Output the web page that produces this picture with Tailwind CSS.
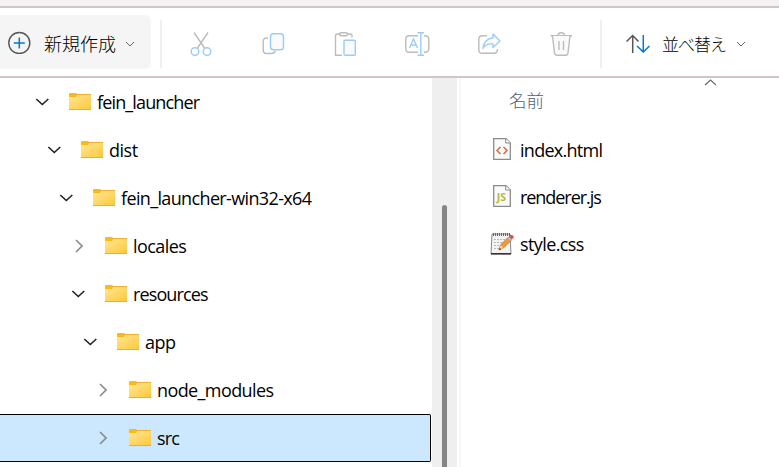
<!DOCTYPE html>
<html lang="ja">
<head>
<meta charset="utf-8">
<title>src</title>
<script src="https://cdn.jsdelivr.net/npm/@tailwindcss/browser@4"></script>
</head>
<body class="flex h-[467px] w-[779px] flex-col overflow-hidden bg-white font-['Open_Sans','Noto_Sans_CJK_JP',sans-serif] text-black">
<svg class="absolute size-0">
  <defs>
    <linearGradient id="fg" x1="0" y1="0" x2="1" y2="1"><stop offset="0" stop-color="#ffe69c"/><stop offset="1" stop-color="#ffc937"/></linearGradient>
    <symbol id="folder" viewBox="0 0 22 17">
      <path d="M0 1Q0 0 1 0H6.500Q7.200 0 8.300 1V5H0Z" fill="#fbb917"/>
      <path d="M0 4H7L8.500 2H22V16H0Z" fill="url(#fg)"/>
      <path d="M8 1H22V2H8Z" fill="#efb12c"/>
      <path d="M0 16H22V17H0Z" fill="#efad2b"/>
    </symbol>
    <symbol id="down" viewBox="0 0 14 8"><path d="M1.300 1L7.300 6.500L13.300 1" fill="none" stroke="#222" stroke-width="1.600"/></symbol>
    <symbol id="right" viewBox="0 0 8 14"><path d="M1 1L7 7L1 13" fill="none" stroke="#8c8c8c" stroke-width="1.600"/></symbol>
    <symbol id="page" viewBox="0 0 18 22"><path d="M.7.700H13L17.300 5V21.300H.7Z" fill="#fafafa" stroke="#8b8b8b" stroke-width="1.300"/><path d="M12.700.700V5H17.300" fill="#fff" stroke="#8b8b8b"/></symbol>
  </defs>
</svg>
<div class="h-2 shrink-0 border-b-2 border-[#d0c6c9] bg-[#f4f2f4]"></div>
<header class="flex h-[70px] shrink-0 items-center border-b-2 border-[#d0c6c9]">
  <button class="flex h-[54px] w-[151px] items-center rounded-r-md bg-[#f5f5f5] pl-2">
    <svg class="size-[23px]" viewBox="0 0 23 23" fill="none"><circle cx="11.300" cy="12" r="10.500" stroke="#555" stroke-width="1.400"/><path d="M11.300 6.500V17.500M5.800 12H16.800" stroke="#0078d4" stroke-width="1.500"/></svg>
    <span class="ml-[13px] w-[72px] whitespace-nowrap pt-[3px] text-[18px] font-light leading-none">新規作成</span>
    <svg class="ml-[9px] mt-1 h-[6px] w-[10px]" viewBox="0 0 10 6" fill="none"><path d="M1 1L5 5L9 1" stroke="#666"/></svg>
  </button>
  <div class="ml-[9px] h-12 w-[2px] bg-[#f0f0f0] mt-1"></div>
  <svg class="ml-7 mt-1 size-6" viewBox="0 0 24 24" fill="none" stroke-width="1.400"><path d="M4 .5L14.500 16M18 .5L7.500 16" stroke="#bcbcbc"/><circle cx="5" cy="19.500" r="3.800" stroke="#9bcdf4"/><circle cx="17" cy="19.500" r="3.800" stroke="#9bcdf4"/></svg>
  <svg class="ml-[48px] mt-1 size-6" viewBox="0 0 24 24" fill="none" stroke-width="1.400"><path d="M6 6H4.500Q1.200 6 1.200 9.500V18Q1.200 21.500 4.500 21.500H9.500Q12.500 21.500 13.300 19" stroke="#bcbcbc"/><rect x="8.500" y="1.700" width="13" height="16" rx="3" stroke="#9bcdf4" fill="#fafafa"/></svg>
  <svg class="ml-[48px] mt-1 size-6" viewBox="0 0 24 24" fill="none" stroke-width="1.400"><path d="M6.500 2H3.500Q1.500 2 1.500 4V23.200H8M13.500 2H16.500Q18 2 18 3.500V5.500" stroke="#bcbcbc"/><rect x="5.500" y=".7" width="8" height="3" rx="1.500" stroke="#bcbcbc"/><rect x="10" y="8.200" width="11.300" height="15" rx="1" stroke="#9bcdf4" fill="#fafafa"/></svg>
  <svg class="ml-[47px] mt-1 size-6 overflow-visible" viewBox="0 0 24 24" fill="none" stroke-width="1.400"><path d="M13 3.700H4Q.8 3.700 .8 7V17Q.8 20.300 4 20.300H13M19 3.700H20.500Q23.500 4 23.800 7V17Q23.500 20 20.500 20.300H19" stroke="#bcbcbc"/><path d="M4.500 16L8.500 7L12.500 16M6 13H11M12.500.700H19M12.500 23.300H19M15.800.700V23.300" stroke="#9bcdf4"/></svg>
  <svg class="ml-[49px] mt-1 size-6" viewBox="0 0 24 24" fill="none" stroke-width="1.400"><path d="M9 3.700H4.500Q.8 3.700.8 7V18Q.8 21.300 4.500 21.300H16Q19.500 21.300 19.500 17" stroke="#bcbcbc"/><path d="M15 2L22 9L15 15.500V12Q8.500 11 5 16.300Q6 7 15 5.800Z" stroke="#9bcdf4" stroke-linejoin="round" fill="#fafafa"/></svg>
  <svg class="ml-[48px] mt-1 size-6" viewBox="0 0 24 24" fill="none" stroke="#bcbcbc" stroke-width="1.400"><path d="M.5 3.700H22M8 3.500Q8 .7 11.300.7Q14.500.7 14.500 3.500"/><path d="M2.500 4L4.500 21Q5 23.300 6.500 23.300H16Q17.700 23.300 18 21L20 4" fill="#fafafa"/><path d="M9 9V18M13.500 9V18"/></svg>
  <div class="ml-[26px] mt-1 h-12 w-[2px] bg-[#f0f0f0]"></div>
  <button class="flex items-center pt-1">
    <svg class="ml-6 h-5 w-6" viewBox="0 0 24 20" fill="none" stroke-width="1.500"><path d="M6.700 19V1.500M.5 7.500L6.700 1.500L12.500 7.500" stroke="#555"/><path d="M17.300 1V18M11 12L17.300 18L23.500 12" stroke="#0078d4"/></svg>
    <span class="ml-[12px] w-[64px] whitespace-nowrap text-[17px] font-light leading-none tracking-[-1px]">並べ替え</span>
    <svg class="ml-[10px] h-[6px] w-[10px]" viewBox="0 0 10 6" fill="none"><path d="M1 1L5 5L9 1" stroke="#666"/></svg>
  </button>
</header>
<main class="flex min-h-0 flex-1 text-[18px] leading-6">
  <nav class="w-[432px] shrink-0 pr-px">
    <div class="flex h-12 items-center pl-[35px]"><svg class="h-2 w-[14px]"><use href="#down"/></svg><svg class="mb-px ml-5 h-[17px] w-[22px]"><use href="#folder"/></svg><span class="ml-[6px] tracking-[-0.860px]">fein_launcher</span></div>
    <div class="flex h-12 items-center pl-[47px]"><svg class="h-2 w-[14px]"><use href="#down"/></svg><svg class="mb-px ml-5 h-[17px] w-[22px]"><use href="#folder"/></svg><span class="ml-[6px] tracking-[-0.500px]">dist</span></div>
    <div class="flex h-12 items-center pl-[59px]"><svg class="h-2 w-[14px]"><use href="#down"/></svg><svg class="mb-px ml-5 h-[17px] w-[22px]"><use href="#folder"/></svg><span class="ml-[6px] tracking-[-0.640px]">fein_launcher-win32-x64</span></div>
    <div class="flex h-12 items-center pl-[75px]"><svg class="h-[14px] w-2"><use href="#right"/></svg><svg class="mb-px ml-[22px] h-[17px] w-[22px]"><use href="#folder"/></svg><span class="ml-[6px] tracking-[-0.560px]">locales</span></div>
    <div class="flex h-12 items-center pl-[71px]"><svg class="h-2 w-[14px]"><use href="#down"/></svg><svg class="mb-px ml-5 h-[17px] w-[22px]"><use href="#folder"/></svg><span class="ml-[6px] tracking-[-0.880px]">resources</span></div>
    <div class="flex h-12 items-center pl-[83px]"><svg class="h-2 w-[14px]"><use href="#down"/></svg><svg class="mb-px ml-5 h-[17px] w-[22px]"><use href="#folder"/></svg><span class="ml-[6px] tracking-[-0.500px]">app</span></div>
    <div class="flex h-12 items-center pl-[99px]"><svg class="h-[14px] w-2"><use href="#right"/></svg><svg class="mb-px ml-[22px] h-[17px] w-[22px]"><use href="#folder"/></svg><span class="ml-[6px] tracking-[-0.600px]">node_modules</span></div>
    <div class="flex h-12 items-center rounded-r-[2px] border-y border-r border-black bg-[#cce8ff] pl-[99px]"><svg class="h-[14px] w-2"><use href="#right"/></svg><svg class="mb-px ml-[22px] h-[17px] w-[22px]"><use href="#folder"/></svg><span class="ml-[6px] tracking-[-0.800px]">src</span></div>
  </nav>
  <div class="w-[25px] shrink-0 bg-[#efefef] pl-[10px] pt-[127px]"><div class="h-full w-[5px] rounded-t-full bg-[#858585]"></div></div>
  <section class="relative ml-[2px] flex-1 border-l-2 border-[#f7f7f7]">
    <svg class="absolute left-[243px] top-[1px] h-[7px] w-3" viewBox="0 0 12 7" fill="none"><path d="M1 6L6.500 1L12 6" stroke="#666" stroke-width="1.200"/></svg>
    <div class="flex h-12 items-center pb-[5px] pl-12 text-[17.500px] font-light text-[#4c607a]">名前</div>
    <div class="flex h-[47px] items-center pl-8"><svg class="mb-[2px] h-[22px] w-[18px]" viewBox="0 0 18 22"><use href="#page"/><path d="M7.500 9L4 12.500L7.500 16M10.500 9L14 12.500L10.500 16" fill="none" stroke="#d8693b" stroke-width="1.500"/></svg><span class="ml-[9px] tracking-[-0.720px]">index.html</span></div>
    <div class="flex h-[47px] items-center pl-8"><svg class="mb-[2px] h-[22px] w-[18px]" viewBox="0 0 18 22"><use href="#page"/><text x="3.800" y="16.300" font-family="Open Sans" font-size="10.500" font-weight="700" letter-spacing="0" fill="#b7b83b">JS</text></svg><span class="ml-[9px] tracking-[-1.050px]">renderer.js</span></div>
    <div class="flex h-[47px] items-center pl-[29px]">
      <svg class="mb-px h-[23px] w-6" viewBox="0 0 24 23"><path d="M2 2H20L21 22H1Z" fill="#f3f3f3" stroke="#888"/><path d="M1 21H21V22.500H1Z" fill="#333"/><path d="M3 2.500H20" stroke="#666" stroke-width="3" stroke-dasharray="1 1"/><path d="M4 7.500H16M4 10.500H13M4 13.500H11M4 16.500H9" stroke="#bbb" stroke-dasharray="2 1"/><path d="M9 18L10.500 13L18.500 5L21.500 8L13.500 16Z" fill="#f39a35" stroke="#a8612a" stroke-width=".7"/><path d="M9 18L10.500 13L13.500 16Z" fill="#f4d3a3"/><path d="M9 18L9.700 15.800L11.200 17.200Z" fill="#333"/><path d="M17.500 6L19 4.500L22 7.500L20.500 9Z" fill="#b8bfc4"/><path d="M18.800 4.700L20.500 3Q24 2.500 23.700 5.500L21.800 7.600Z" fill="#e44d50"/></svg>
      <span class="ml-[6px] tracking-[-0.600px]">style.css</span></div>
  </section>
</main>
</body>
</html>
